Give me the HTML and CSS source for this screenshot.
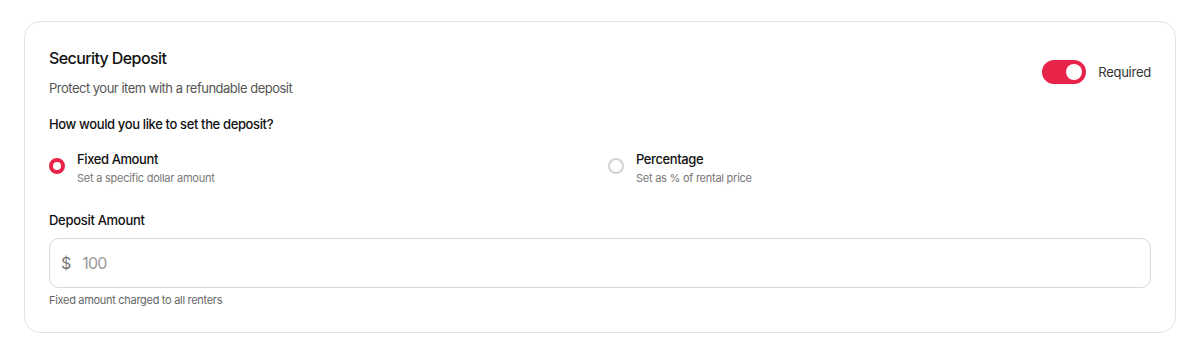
FILE: index.html
```html
<!DOCTYPE html>
<html>
<head>
<meta charset="utf-8">
<link rel="stylesheet" href="styles.css">
</head>
<body>
<section class="card">
  <div class="header">
    <div class="header-text">
      <h2 class="title">Security Deposit</h2>
      <p class="subtitle">Protect your item with a refundable deposit</p>
    </div>
    <label class="toggle-wrap">
      <span class="toggle on"><span class="knob"></span></span>
      <span class="toggle-label">Required</span>
    </label>
  </div>

  <p class="question">How would you like to set the deposit?</p>

  <div class="options">
    <div class="option">
      <span class="radio checked"></span>
      <div class="option-text">
        <div class="option-title">Fixed Amount</div>
        <div class="option-desc">Set a specific dollar amount</div>
      </div>
    </div>
    <div class="option">
      <span class="radio"></span>
      <div class="option-text">
        <div class="option-title">Percentage</div>
        <div class="option-desc">Set as % of rental price</div>
      </div>
    </div>
  </div>

  <div class="field">
    <div class="field-label">Deposit Amount</div>
    <div class="input">
      <span class="prefix">$</span>
      <span class="placeholder">100</span>
    </div>
    <div class="helper">Fixed amount charged to all renters</div>
  </div>
</section>
</body>
</html>
```

FILE: styles.css
```css
* { box-sizing: border-box; }
body {
  margin: 0;
  padding: 21px 20px 0 24px;
  background: #ffffff;
  font-family: Inter, "Noto Sans", sans-serif;
  color: #111111;
}
.card {
  width: 1152px;
  border: 1px solid #e3e3e3;
  border-radius: 16px;
  padding: 24px;
  background: #fff;
}
.header {
  display: flex;
  align-items: center;
  justify-content: space-between;
}
.title {
  margin: 0;
  font-size: 16px;
  line-height: 24px;
  font-weight: 500;
  letter-spacing: -0.6px;
  color: #111;
}
.subtitle {
  margin: 8px 0 0;
  font-size: 13px;
  line-height: 20px;
  letter-spacing: -0.5px;
  color: #555;
}
.toggle-wrap {
  display: flex;
  align-items: center;
  gap: 12px;
}
.toggle {
  width: 44px;
  height: 24px;
  border-radius: 12px;
  background: #e8234a;
  display: flex;
  align-items: center;
  justify-content: flex-end;
  padding: 0 4px;
}
.knob {
  width: 16px;
  height: 16px;
  border-radius: 50%;
  background: #fff;
}
.toggle-label {
  font-size: 13px;
  letter-spacing: -0.25px;
  color: #333;
}
.question {
  margin: 16px 0 0;
  font-size: 13px;
  line-height: 20px;
  font-weight: 500;
  letter-spacing: -0.37px;
  color: #111;
}
.options {
  margin-top: 15px;
  display: grid;
  grid-template-columns: 1fr 1fr;
  gap: 16px;
}
.option {
  display: flex;
  align-items: flex-start;
  gap: 12px;
}
.radio {
  width: 16px;
  height: 16px;
  border-radius: 50%;
  border: 2px solid #d4d4d8;
  margin-top: 9px;
  flex: none;
}
.radio.checked {
  border: 4px solid #e8234a;
}
.option-title {
  font-size: 13px;
  line-height: 20px;
  font-weight: 500;
  letter-spacing: -0.4px;
  color: #111;
}
.option-desc {
  margin-top: 1px;
  font-size: 11px;
  line-height: 16px;
  letter-spacing: -0.25px;
  color: #777;
}
.field {
  margin-top: 24px;
}
.field-label {
  font-size: 13px;
  line-height: 20px;
  font-weight: 500;
  letter-spacing: -0.3px;
  color: #111;
}
.input {
  margin-top: 8px;
  height: 50px;
  border: 1px solid #d8d8d8;
  border-radius: 10px;
  display: flex;
  align-items: center;
  padding: 0 11px;
  gap: 11px;
  font-size: 16px;
}
.prefix { color: #777; }
.placeholder { color: #999; letter-spacing: -0.8px; }
.helper {
  margin-top: 4px;
  font-size: 11px;
  line-height: 16px;
  letter-spacing: -0.3px;
  color: #666;
}
```
